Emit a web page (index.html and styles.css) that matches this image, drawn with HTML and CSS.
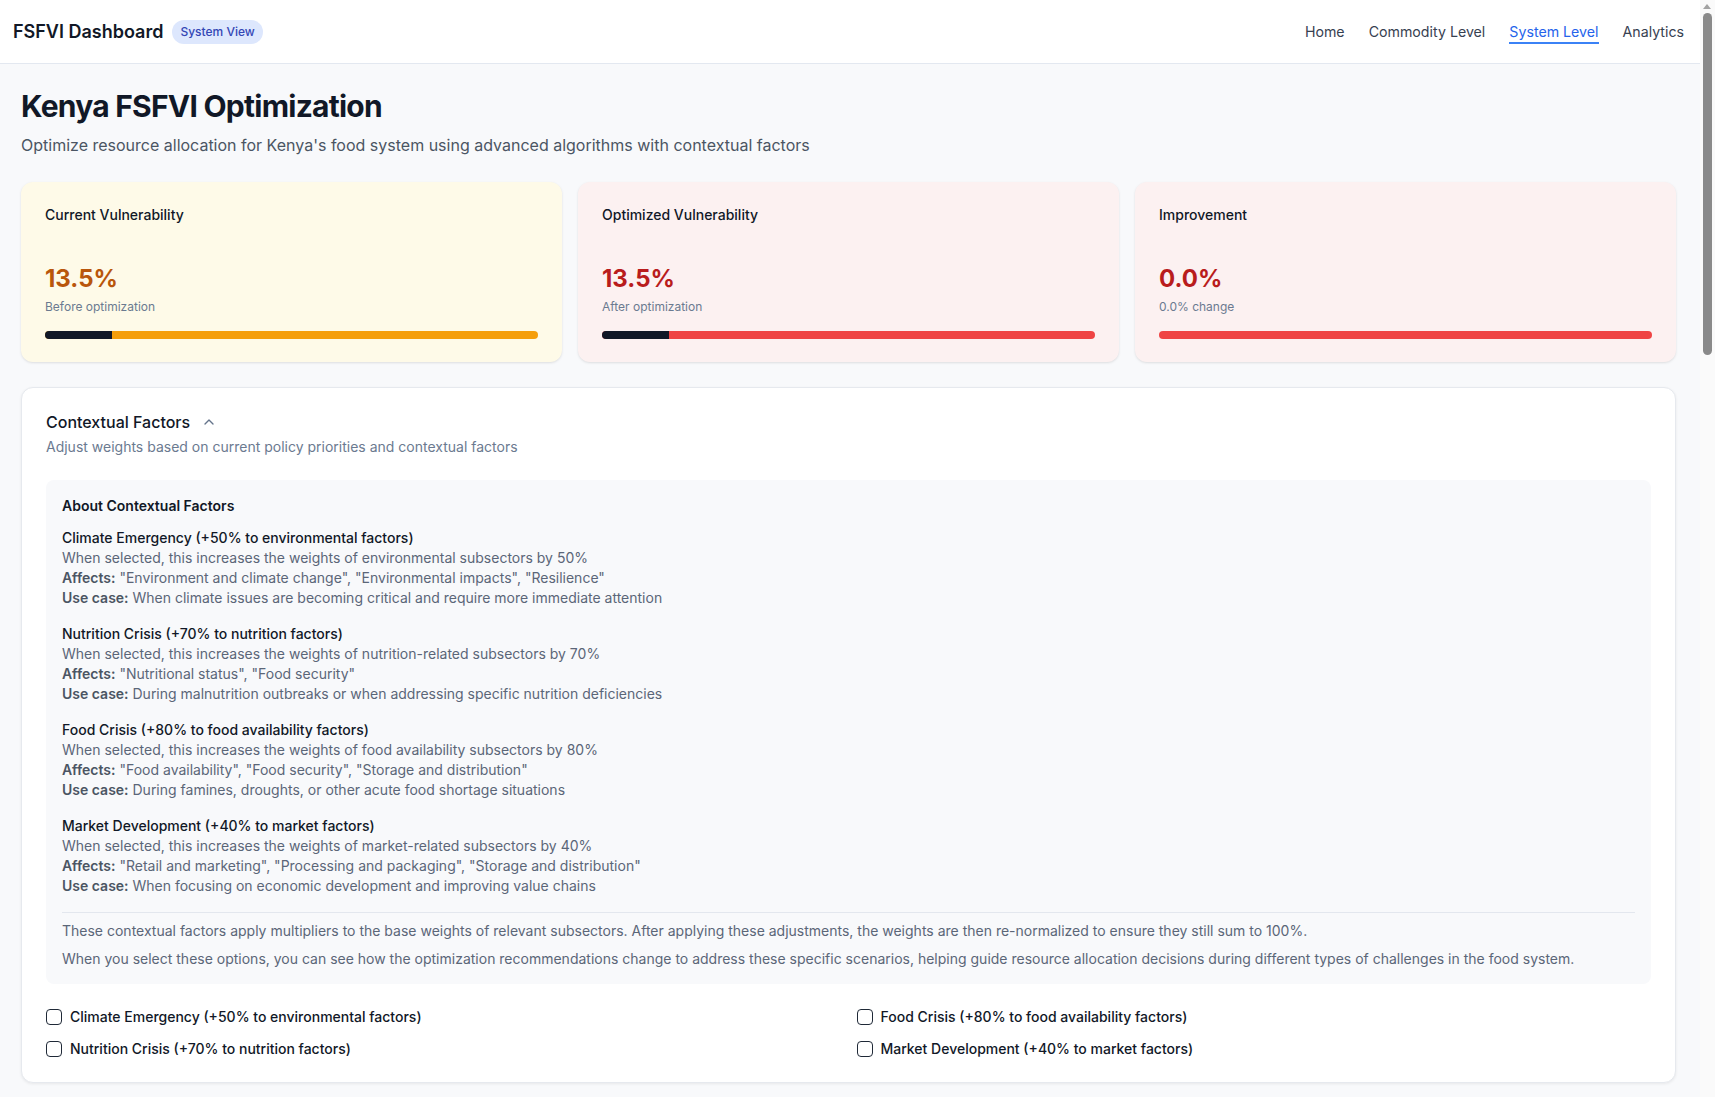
FILE: index.html
```html
<!DOCTYPE html>
<html lang="en">
<head>
<meta charset="utf-8">
<title>FSFVI Dashboard</title>
<link rel="stylesheet" href="styles.css">
</head>
<body>
<header class="topbar">
  <div class="brand">
    <span class="brand-title">FSFVI Dashboard</span>
    <span class="badge">System View</span>
  </div>
  <nav class="nav">
    <a class="nav-link" href="#">Home</a>
    <a class="nav-link" href="#">Commodity Level</a>
    <a class="nav-link active" href="#">System Level</a>
    <a class="nav-link" href="#">Analytics</a>
  </nav>
</header>

<main class="page">
  <h1 class="page-title">Kenya FSFVI Optimization</h1>
  <p class="page-sub">Optimize resource allocation for Kenya's food system using advanced algorithms with contextual factors</p>

  <section class="stats">
    <div class="stat stat-amber">
      <div class="stat-label">Current Vulnerability</div>
      <div class="stat-value val-amber">13.5%</div>
      <div class="stat-note">Before optimization</div>
      <div class="bar bar-amber"><div class="bar-fill" style="width:13.5%"></div></div>
    </div>
    <div class="stat stat-red">
      <div class="stat-label">Optimized Vulnerability</div>
      <div class="stat-value val-red">13.5%</div>
      <div class="stat-note">After optimization</div>
      <div class="bar bar-red"><div class="bar-fill" style="width:13.5%"></div></div>
    </div>
    <div class="stat stat-red">
      <div class="stat-label">Improvement</div>
      <div class="stat-value val-red">0.0%</div>
      <div class="stat-note">0.0% change</div>
      <div class="bar bar-red"><div class="bar-fill" style="width:0%"></div></div>
    </div>
  </section>

  <section class="panel">
    <div class="panel-head">
      <h2 class="panel-title">Contextual Factors
        <svg class="chev" width="16" height="16" viewBox="0 0 24 24" fill="none" stroke="currentColor" stroke-width="2" stroke-linecap="round" stroke-linejoin="round"><path d="m18 15-6-6-6 6"/></svg>
      </h2>
      <p class="panel-sub">Adjust weights based on current policy priorities and contextual factors</p>
    </div>

    <div class="info">
      <h3 class="info-title">About Contextual Factors</h3>

      <div class="factor">
        <div class="factor-name">Climate Emergency (+50% to environmental factors)</div>
        <div class="factor-line">When selected, this increases the weights of environmental subsectors by 50%</div>
        <div class="factor-line"><b>Affects:</b> "Environment and climate change", "Environmental impacts", "Resilience"</div>
        <div class="factor-line"><b>Use case:</b> When climate issues are becoming critical and require more immediate attention</div>
      </div>

      <div class="factor">
        <div class="factor-name">Nutrition Crisis (+70% to nutrition factors)</div>
        <div class="factor-line">When selected, this increases the weights of nutrition-related subsectors by 70%</div>
        <div class="factor-line"><b>Affects:</b> "Nutritional status", "Food security"</div>
        <div class="factor-line"><b>Use case:</b> During malnutrition outbreaks or when addressing specific nutrition deficiencies</div>
      </div>

      <div class="factor">
        <div class="factor-name">Food Crisis (+80% to food availability factors)</div>
        <div class="factor-line">When selected, this increases the weights of food availability subsectors by 80%</div>
        <div class="factor-line"><b>Affects:</b> "Food availability", "Food security", "Storage and distribution"</div>
        <div class="factor-line"><b>Use case:</b> During famines, droughts, or other acute food shortage situations</div>
      </div>

      <div class="factor">
        <div class="factor-name">Market Development (+40% to market factors)</div>
        <div class="factor-line">When selected, this increases the weights of market-related subsectors by 40%</div>
        <div class="factor-line"><b>Affects:</b> "Retail and marketing", "Processing and packaging", "Storage and distribution"</div>
        <div class="factor-line"><b>Use case:</b> When focusing on economic development and improving value chains</div>
      </div>

      <div class="info-foot">
        <p>These contextual factors apply multipliers to the base weights of relevant subsectors. After applying these adjustments, the weights are then re-normalized to ensure they still sum to 100%.</p>
        <p>When you select these options, you can see how the optimization recommendations change to address these specific scenarios, helping guide resource allocation decisions during different types of challenges in the food system.</p>
      </div>
    </div>

    <div class="options">
      <label class="option"><span class="check"></span>Climate Emergency (+50% to environmental factors)</label>
      <label class="option"><span class="check"></span>Food Crisis (+80% to food availability factors)</label>
      <label class="option"><span class="check"></span>Nutrition Crisis (+70% to nutrition factors)</label>
      <label class="option"><span class="check"></span>Market Development (+40% to market factors)</label>
    </div>
  </section>
</main>

<div class="scrollbar" aria-hidden="true">
  <span class="scroll-arrow"></span>
  <span class="scroll-thumb"></span>
</div>
</body>
</html>
```

FILE: styles.css
```css
* { box-sizing: border-box; }
html, body { margin: 0; padding: 0; }
body {
  font-family: Inter, "Noto Sans", "Liberation Sans", sans-serif;
  background: #f8f9fb;
  color: #111827;
  margin-right: 15px;
}

/* classic browser scrollbar look, fixed over the right edge */
.scrollbar {
  position: fixed;
  top: 0;
  right: 0;
  width: 15px;
  height: 100vh;
  background: #fafafa;
}
.scroll-arrow {
  position: absolute;
  top: 4px;
  left: 3px;
  width: 0;
  height: 0;
  border-left: 4.5px solid transparent;
  border-right: 4.5px solid transparent;
  border-bottom: 5px solid #a3a3a3;
}
.scroll-thumb {
  position: absolute;
  top: 13px;
  left: 3px;
  width: 9px;
  height: 342px;
  border-radius: 5px;
  background: #8a8a8a;
}

.topbar {
  height: 64px;
  background: #ffffff;
  border-bottom: 1px solid #e3e8f0;
  display: flex;
  align-items: center;
  justify-content: space-between;
  padding: 0 16px 0 13px;
}
.brand { display: flex; align-items: center; gap: 9px; }
.brand-title { font-size: 18px; font-weight: 600; color: #111827; }
.badge {
  background: #dde7fd;
  color: #3346b5;
  font-size: 12px;
  font-weight: 500;
  line-height: 16px;
  padding: 4px 8px;
  border-radius: 999px;
}
.nav { display: flex; gap: 24px; align-items: center; }
.nav-link {
  font-size: 14.2px;
  color: #374151;
  text-decoration: none;
  padding: 4px 0 2px;
  border-bottom: 2px solid transparent;
}
.nav-link.active { color: #2563eb; border-bottom-color: #3b82f6; }

.page {
  padding: 24px 24px 40px 21px;
  min-height: 3400px;
}
.page-title {
  margin: 0;
  font-size: 30px;
  line-height: 36px;
  font-weight: 700;
  color: #111827;
  letter-spacing: -0.75px;
}
.page-sub {
  margin: 9px 0 0;
  font-size: 16px;
  line-height: 24px;
  color: #4b5563;
}

.stats {
  margin-top: 25px;
  display: grid;
  grid-template-columns: repeat(3, 1fr);
  gap: 16px;
}
.stat {
  border-radius: 12px;
  padding: 23px 24px 23px;
  box-shadow: 0 1px 3px rgba(0,0,0,0.08), 0 1px 2px rgba(0,0,0,0.04);
}
.stat-amber { background: #fefae8; }
.stat-red { background: #fcf1f1; }
.stat-label { font-size: 14px; line-height: 20px; font-weight: 500; color: #111827; }
.stat-value { margin-top: 38px; font-size: 24px; line-height: 32px; font-weight: 700; }
.val-amber { color: #b9560b; }
.val-red { color: #b91c1c; }
.stat-note { margin-top: 4px; font-size: 12px; line-height: 16px; color: #6b7a90; }
.bar { margin-top: 16px; height: 8px; border-radius: 999px; overflow: hidden; }
.bar-amber { background: #f59e0b; }
.bar-red { background: #ef4444; }
.bar-fill { height: 100%; background: #111827; }

.panel {
  margin-top: 25px;
  background: #ffffff;
  border: 1px solid #e6e9ee;
  border-radius: 12px;
  box-shadow: 0 1px 3px rgba(0,0,0,0.07);
  padding: 22px 24px 23px;
}
.panel-title {
  margin: 0;
  font-size: 16px;
  line-height: 24px;
  font-weight: 500;
  color: #111827;
  display: flex;
  align-items: center;
  gap: 11px;
}
.chev { color: #64748b; }
.panel-sub { margin: 3px 0 0; font-size: 14px; line-height: 20px; color: #6b7a90; }

.info {
  margin-top: 23px;
  background: #f8f9fb;
  border-radius: 8px;
  padding: 16px 16px 15px;
}
.info-title { margin: 0; font-size: 14px; line-height: 20px; font-weight: 600; color: #111827; }
.factor { margin-top: 12px; }
.factor + .factor { margin-top: 16px; }
.factor-name { font-size: 14px; line-height: 20px; font-weight: 500; color: #111827; }
.factor-line { font-size: 14px; line-height: 20px; color: #5b6678; }
.factor-line b { font-weight: 600; color: #4b5563; }

.info-foot {
  margin-top: 16px;
  border-top: 1px solid #e3e7ee;
  padding-top: 8px;
  display: flex;
  flex-direction: column;
  gap: 8px;
}
.info-foot p { margin: 0; font-size: 14px; line-height: 20px; color: #5b6678; }

.options {
  margin-top: 23px;
  display: grid;
  grid-template-columns: 1fr 1fr;
  gap: 12px 16px;
}
.option {
  display: flex;
  align-items: center;
  gap: 8px;
  font-size: 14px;
  line-height: 20px;
  font-weight: 500;
  color: #111827;
}
.check {
  width: 16px;
  height: 16px;
  border: 1px solid #1f2937;
  border-radius: 4px;
  background: #fff;
  flex: none;
}
```
